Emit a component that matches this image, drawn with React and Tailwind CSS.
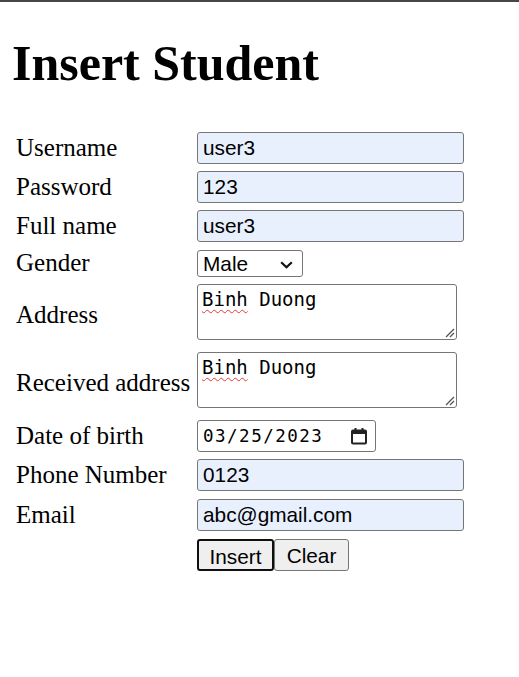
import { useState } from 'react'

const labelCls = 'text-[25px] leading-[28px] text-black whitespace-nowrap'
const inputCls =
  'block w-[267px] h-[32px] pl-[5px] bg-[#e8f0fe] border border-[#767676] rounded-[3px] text-[20.8px] text-black outline-none'

function ResizeGrip() {
  return (
    <svg className="absolute right-[1px] bottom-[1px]" width="11" height="11" viewBox="0 0 11 11">
      <line x1="10" y1="2" x2="2" y2="10" stroke="#555" strokeWidth="1.3" />
      <line x1="10" y1="6" x2="6" y2="10" stroke="#555" strokeWidth="1.3" />
    </svg>
  )
}

function FakeTextarea({ word, rest }) {
  return (
    <div className="relative w-[260px] h-[56px] border border-[#767676] rounded-[3px] bg-white pl-[4px] pt-[3px] font-['DejaVu_Sans_Mono',monospace] text-[19px] leading-[22px] text-black">
      <span className="underline decoration-wavy decoration-[#e53935] decoration-[1px] underline-offset-[3px]">{word}</span>
      {rest}
      <ResizeGrip />
    </div>
  )
}

export default function App() {
  const [form, setForm] = useState({
    username: 'user3',
    password: '123',
    fullname: 'user3',
    gender: 'Male',
    phone: '0123',
    email: 'abc@gmail.com',
  })

  const update = (key) => (e) => setForm({ ...form, [key]: e.target.value })

  return (
    <div className="min-h-[677px] bg-white font-['Liberation_Serif',serif]">
      <div className="h-[2px] bg-[#474747]"></div>
      <h1 className="ml-[12px] mt-[34px] text-[50px] leading-[55px] font-bold text-black">Insert Student</h1>

      <div className="ml-[16px] mt-[41px] grid grid-cols-[181px_auto] gap-y-[7px] items-center font-['Liberation_Sans',sans-serif]">
        <span className={`${labelCls} font-['Liberation_Serif',serif]`}>Username</span>
        <input className={inputCls} value={form.username} onChange={update('username')} />

        <span className={`${labelCls} font-['Liberation_Serif',serif]`}>Password</span>
        <input className={inputCls} value={form.password} onChange={update('password')} />

        <span className={`${labelCls} font-['Liberation_Serif',serif]`}>Full name</span>
        <input className={inputCls} value={form.fullname} onChange={update('fullname')} />

        <span className={`${labelCls} font-['Liberation_Serif',serif]`}>Gender</span>
        <div className="relative w-[106px] h-[27px]">
          <select
            className="appearance-none w-full h-full pl-[5px] bg-white border border-[#767676] rounded-[3px] text-[20.8px] leading-[25px] text-black outline-none"
            value={form.gender}
            onChange={update('gender')}
          >
            <option>Male</option>
            <option>Female</option>
          </select>
          <svg className="absolute right-[10px] top-[11px] pointer-events-none" width="13" height="8" viewBox="0 0 13 8">
            <polyline points="1.2,1.2 6.5,6.3 11.8,1.2" fill="none" stroke="#111" strokeWidth="2.2" />
          </svg>
        </div>

        <span className={`${labelCls} font-['Liberation_Serif',serif]`}>Address</span>
        <div className="pb-[5px]">
          <FakeTextarea word="Binh" rest=" Duong" />
        </div>

        <span className={`${labelCls} font-['Liberation_Serif',serif]`}>Received address</span>
        <div className="pb-[5px]">
          <FakeTextarea word="Binh" rest=" Duong" />
        </div>

        <span className={`${labelCls} font-['Liberation_Serif',serif]`}>Date of birth</span>
        <div className="flex items-center w-[179px] h-[32px] pl-[5px] bg-white border border-[#767676] rounded-[3px]">
          <span className="font-['DejaVu_Sans_Mono',monospace] text-[17.5px] tracking-[1.5px] text-black">03/25/2023</span>
          <svg className="ml-auto mr-[7px]" width="18" height="18" viewBox="0 0 18 18">
            <rect x="2" y="3.5" width="14" height="13" rx="1" fill="none" stroke="#222" strokeWidth="2" />
            <rect x="2" y="3.5" width="14" height="3.5" fill="#222" />
            <rect x="4.5" y="1" width="2" height="3" fill="#222" />
            <rect x="11.5" y="1" width="2" height="3" fill="#222" />
          </svg>
        </div>

        <span className={`${labelCls} font-['Liberation_Serif',serif]`}>Phone Number</span>
        <input className={inputCls} value={form.phone} onChange={update('phone')} />

        <span className={`${labelCls} font-['Liberation_Serif',serif]`}>Email</span>
        <input className={`${inputCls} mt-[1px]`} value={form.email} onChange={update('email')} />

        <span></span>
        <div className="flex mt-[1px]">
          <button className="h-[32px] w-[77px] bg-[#efefef] border-2 border-[#101010] rounded-[3px] text-[20.8px] text-black">
            Insert
          </button>
          <button className="h-[32px] w-[75px] bg-[#efefef] border border-[#767676] rounded-[3px] text-[20.8px] text-black">
            Clear
          </button>
        </div>
      </div>
    </div>
  )
}
